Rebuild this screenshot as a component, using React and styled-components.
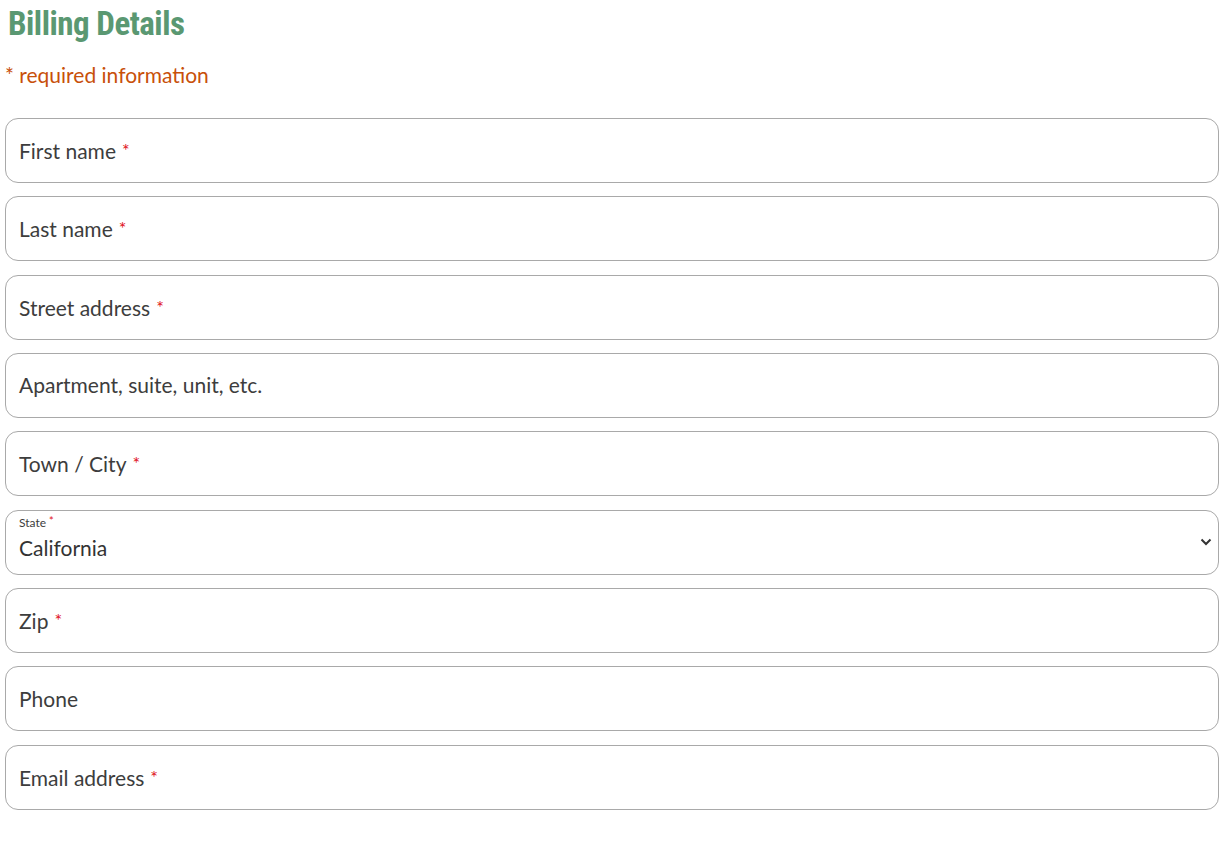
import React from 'react'
import styled, { createGlobalStyle } from 'styled-components'

const Global = createGlobalStyle`
  body {
    margin: 0;
    background: #fff;
    font-family: Lato, "Noto Sans", "Liberation Sans", sans-serif;
  }
`

const Page = styled.div`
  padding: 0 7px 0 5px;
`

const Heading = styled.h2`
  margin: 0;
  padding: 3px 0 0 3px;
  font-family: "Liberation Sans Narrow", "Roboto Condensed", "Liberation Sans", sans-serif;
  font-stretch: condensed;
  font-weight: 700;
  font-size: 33px;
  line-height: 42px;
  color: #5a9872;
  letter-spacing: -0.5px;
`

const Note = styled.p`
  margin: 18px 0 0 0;
  font-size: 21px;
  line-height: 24px;
  color: #c8500a;
`

const Form = styled.div`
  margin-top: 31px;
  display: flex;
  flex-direction: column;
  gap: 13.33px;
`

const Field = styled.div`
  position: relative;
  height: 65px;
  border: 1px solid #a9a9a9;
  border-radius: 13px;
  box-sizing: border-box;
  display: flex;
  flex-direction: column;
  justify-content: center;
  padding: 0 13px;
  color: #3d3d3d;
`

const Label = styled.span`
  font-size: 21px;
  line-height: 24px;
  color: #3d3d3d;
`

const Star = styled.span`
  color: #e0101a;
  font-size: ${p => (p.small ? '11px' : '18px')};
  vertical-align: ${p => (p.small ? '2px' : '2px')};
  margin-left: ${p => (p.small ? '3px' : '6px')};
`

const SmallLabel = styled.span`
  font-size: 12px;
  line-height: 14px;
  color: #3d3d3d;
  margin-top: -10px;
`

const Value = styled.span`
  font-size: 21px;
  line-height: 26px;
  color: #333;
  margin-top: 5px;
`

const Chevron = styled.svg`
  position: absolute;
  right: 6px;
  top: 27px;
`

const fields = [
  ['First name', true],
  ['Last name', true],
  ['Street address', true],
  ['Apartment, suite, unit, etc.', false],
  ['Town / City', true],
  'state',
  ['Zip', true],
  ['Phone', false],
  ['Email address', true],
]

export default function App() {
  return (
    <Page>
      <Global />
      <Heading>Billing Details</Heading>
      <Note>* required information</Note>
      <Form>
        {fields.map((f, i) =>
          f === 'state' ? (
            <Field key={i}>
              <SmallLabel>State<Star small>*</Star></SmallLabel>
              <Value>California</Value>
              <Chevron width="12" height="8" viewBox="0 0 12 8">
                <path d="M1.5 1.5 L6 6 L10.5 1.5" fill="none" stroke="#333" strokeWidth="2" />
              </Chevron>
            </Field>
          ) : (
            <Field key={i}>
              <Label>
                {f[0]}
                {f[1] && <Star>*</Star>}
              </Label>
            </Field>
          )
        )}
      </Form>
    </Page>
  )
}
